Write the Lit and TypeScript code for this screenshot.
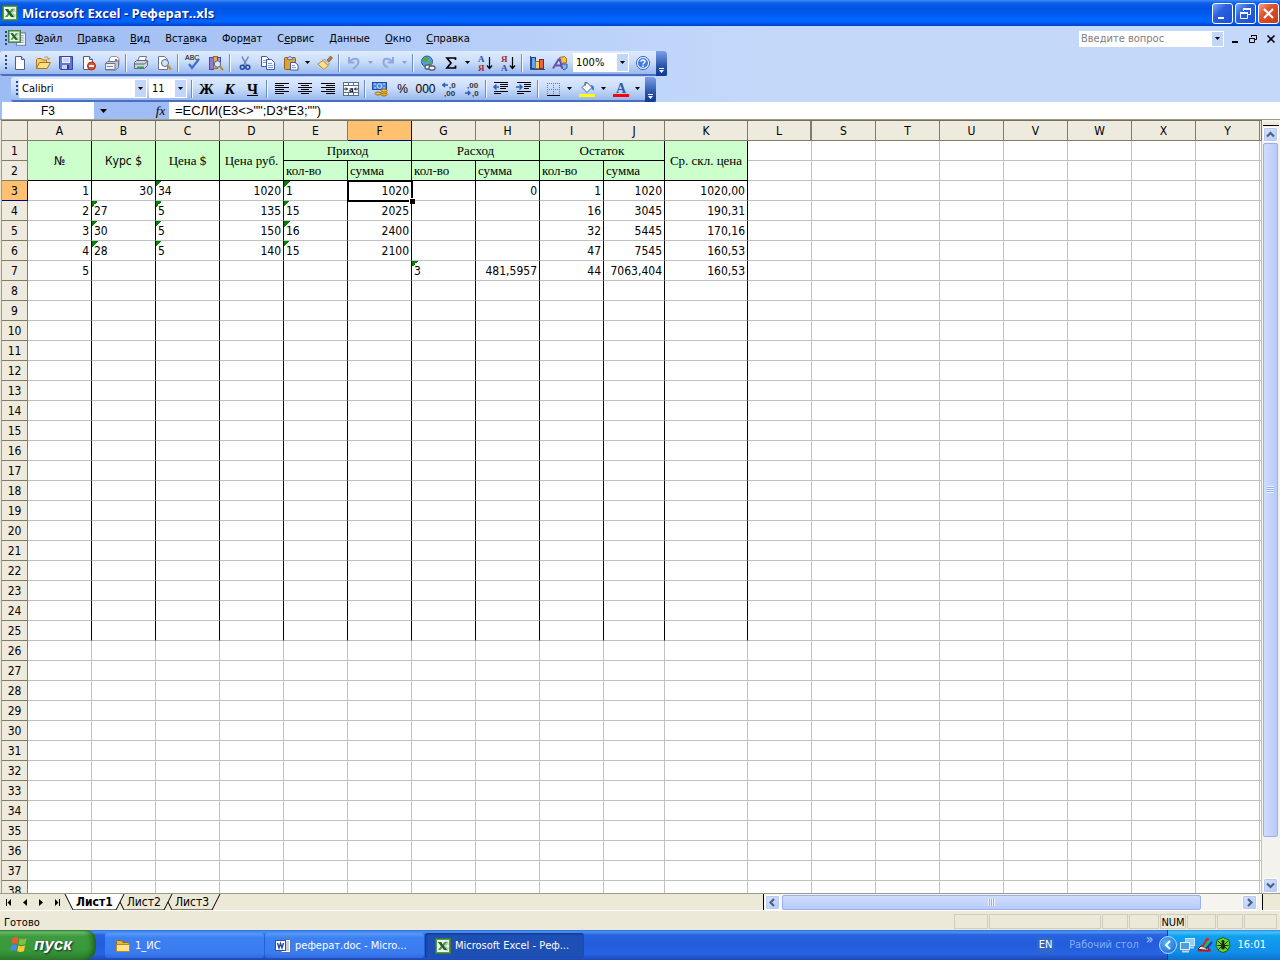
import { LitElement, html, css, svg, nothing, TemplateResult } from "lit";
import { customElement } from "lit/decorators.js";
import { classMap } from "lit/directives/class-map.js";

type Cell = { t: string; left?: boolean; flag?: boolean };

const COLS = ["A", "B", "C", "D", "E", "F", "G", "H", "I", "J", "K", "L", "S", "T", "U", "V", "W", "X", "Y"];
const n = (t: string): Cell => ({ t });
const s = (t: string): Cell => ({ t, left: true, flag: true });

const DATA: Record<number, Record<string, Cell>> = {
  3: { A: n("1"), B: n("30"), C: s("34"), D: n("1020"), E: s("1"), F: n("1020"), H: n("0"), I: n("1"), J: n("1020"), K: n("1020,00") },
  4: { A: n("2"), B: s("27"), C: s("5"), D: n("135"), E: s("15"), F: n("2025"), I: n("16"), J: n("3045"), K: n("190,31") },
  5: { A: n("3"), B: s("30"), C: s("5"), D: n("150"), E: s("16"), F: n("2400"), I: n("32"), J: n("5445"), K: n("170,16") },
  6: { A: n("4"), B: s("28"), C: s("5"), D: n("140"), E: s("15"), F: n("2100"), I: n("47"), J: n("7545"), K: n("160,53") },
  7: { A: n("5"), G: s("3"), H: n("481,5957"), I: n("44"), J: n("7063,404"), K: n("160,53") },
};

const MENU: [string, string, string][] = [
  ["", "Ф", "айл"], ["", "П", "равка"], ["", "В", "ид"], ["Вст", "а", "вка"], ["Фор", "м", "ат"],
  ["С", "е", "рвис"], ["", "Д", "анные"], ["", "О", "кно"], ["", "С", "правка"],
];

const page = svg`<path d="M3.5 1.5h6l3 3v10h-9z" fill="#fff" stroke="#4a5f94"/><path d="M9.5 1.5v3h3" fill="#c7d5f2" stroke="#4a5f94"/>`;
const lines = (a: [number, number, number][]) => a.map(([x, y, w]) => svg`<rect x=${x} y=${y} width=${w} height="1" fill="#000"/>`);
const excel = svg`<rect x=".5" y=".5" width="15" height="15" fill="#5a9a4c" stroke="#3c7a34"/><rect x="2" y="2" width="12" height="12" fill="#eef6ec"/><path d="M10 4h3l-2.500 4L13 12h-3M10 6h4M10 10h4" fill="none" stroke="#a9bfa6"/><path d="M3 4h3l1.500 2.500L9.500 4H12L9 8l3 4H9L7.500 9.500 5.500 12H3l3-4z" fill="#3e9a46"/><path d="M3 4h3l6 8H9z" fill="#1d6328"/>`;

const ICONS: Record<string, unknown> = {
  excel,
  book: svg`<path d="M9.500 2.500h6v11h-8v-3" fill="#fff" stroke="#6b7fae"/><path d="M10 5h4M10 7h4M10 9h4M9 11h5" stroke="#8fa4d3"/><g transform="scale(.72)">${excel}</g>`,
  new: page,
  open: svg`<path d="M1.500 13.500v-9l1-1h4l1 1.500h4v3" fill="#f6cf6b" stroke="#a9741c"/><path d="M1.500 13.500l3-6h11l-3.500 6z" fill="#ffdf83" stroke="#a9741c"/><path d="M9 3c2-2 4-1.500 4.500 1M12 3.500l1.700 1.200L15 3" fill="none" stroke="#e08b1d"/>`,
  save: svg`<path d="M1.500 1.500h13v13h-12l-1-1z" fill="#6177cf" stroke="#3544a0"/><rect x="4" y="2" width="8" height="6" fill="#eef1fd"/><path d="M5 4h6M5 6h6" stroke="#a9b6e6"/><rect x="4" y="10" width="7" height="4" fill="#c7cff0"/><rect x="9" y="10" width="2" height="4" fill="#2e3c8e"/>`,
  perm: svg`<path d="M2.500 1.500h6l3 3v10h-9z" fill="#fff" stroke="#4a5f94"/><path d="M8.500 1.500v3h3" fill="#c7d5f2" stroke="#4a5f94"/><circle cx="10.500" cy="11" r="4" fill="#e2502e" stroke="#a92c12"/><rect x="8" y="10" width="5" height="2" fill="#fff"/>`,
  mail: svg`<path d="M5.500 7V3l2-1.500h5l2.500 2V10h-4" fill="#fff" stroke="#8a93a8"/><path d="M1.500 8.500l2-2h8l3-1v7l-3 2.500h-10z" fill="#c0c8d8" stroke="#6b7690"/><path d="M1.500 8.500h9.500v6H1.500z" fill="#eceff6" stroke="#6b7690"/><path d="M3 11.500h6" stroke="#7b86a0"/><rect x="11" y="4" width="2" height="2" fill="#d85b2e"/>`,
  print: svg`<path d="M4.500 6l2-4.500h7L12 6" fill="#fff" stroke="#6b7690"/><path d="M1.500 7.500l2-2h11v5l-3 3h-10z" fill="#cfd5df" stroke="#5b657c"/><path d="M2 9h9.500l3-3" fill="none" stroke="#5b657c"/><path d="M4 12.500h7" stroke="#3aa53a" stroke-width="2"/>`,
  preview: svg`<path d="M2.500 1.500h6l3 3v10h-9z" fill="#fff" stroke="#6b7690"/><circle cx="9" cy="8" r="3.500" fill="#cfe4f8" stroke="#566a8c"/><path d="M11.500 10.500l3.500 4" stroke="#c58a2a" stroke-width="2"/>`,
  spell: svg`<text x="0" y="5" class="abc">ABC</text><path d="M4 9l3 4 7-9" fill="none" stroke="#3d6fd0" stroke-width="2.200"/>`,
  research: svg`<rect x="1.500" y="2.500" width="4" height="12" fill="#8b7bd2" stroke="#53459b"/><rect x="5.500" y="1.500" width="4" height="12" fill="#e9a94a" stroke="#9b6b1c"/><rect x="9.500" y="2.500" width="3" height="9" fill="#9aa6e3" stroke="#53459b"/><circle cx="9.500" cy="9" r="3.200" fill="#d6e8fa" stroke="#566a8c"/><path d="M12 11.500l3 3.500" stroke="#c58a2a" stroke-width="2"/>`,
  cut: svg`<path d="M5 1.500l4.500 9M11.500 1.500l-5 9" stroke="#6b86b8" stroke-width="1.500"/><circle cx="5.300" cy="12.300" r="2" fill="none" stroke="#23479b" stroke-width="1.500"/><circle cx="10.800" cy="12.300" r="2" fill="none" stroke="#23479b" stroke-width="1.500"/>`,
  copy: svg`<path d="M1.500 1.500h5l2.500 2.500v7.500H1.500z" fill="#fff" stroke="#3d5ba8"/><path d="M3 5.500h3M3 7.500h3" stroke="#7d9be0"/><path d="M6.500 4.500h5l3 3v7h-8z" fill="#fff" stroke="#3d5ba8"/><path d="M8 8.500h4M8 10.500h5M8 12.500h5" stroke="#7d9be0"/>`,
  paste: svg`<rect x="1.500" y="2.500" width="11" height="12" rx="1" fill="#dba13b" stroke="#8f611a"/><path d="M4.500 4.500v-2h1.500l1-1.500 1 1.500h1.500v2z" fill="#d8dce8" stroke="#6b7690"/><path d="M7.500 7.500h4.500l3 2.500v5H7.500z" fill="#fff" stroke="#3d5ba8"/><path d="M9 10.500h3M9 12.500h4" stroke="#7d9be0"/>`,
  brush: svg`<path d="M10 5l3.500-4L15.500 3 12 7z" fill="#b57a2c" stroke="#7a4e16" stroke-width=".6"/><path d="M7.500 4l5 5-1.500 1.500-5-5z" fill="#d9dfeb" stroke="#6b7690" stroke-width=".7"/><path d="M6 5.500l5 5-4 4L.800 9z" fill="#ffe08a" stroke="#a9741c" stroke-width=".8"/>`,
  undo: svg`<path d="M3 2v5.500h5.500M3.500 7c3-4.500 9-4.500 9 0 0 3-3 4.500-5.500 7" fill="none" stroke="#8fa9da" stroke-width="2"/>`,
  redo: svg`<path d="M13 2v5.500H7.500M12.500 7c-3-4.500-9-4.500-9 0 0 3 2 4.500 4.500 5" fill="none" stroke="#8fa9da" stroke-width="2"/>`,
  link: svg`<circle cx="7" cy="6.500" r="5.500" fill="#5a9be0" stroke="#2c5d9c"/><path d="M3 3.500l4-2 2 2-2 3-3 1zM8 8l4-2v4l-3 1z" fill="#4fae3a"/><g fill="#f0f3f8"><rect x="5" y="10" width="6" height="4" rx="2" stroke="#555f73" stroke-width="1.300"/><rect x="9" y="11" width="6" height="4" rx="2" stroke="#555f73" stroke-width="1.300"/></g>`,
  sum: svg`<path d="M12.500 5V3H4l4 5-4 5h8.500v-2.500" fill="none" stroke="#000" stroke-width="1.700"/>`,
  az: svg`<text x="1" y="7" class="gs" fill="#28509c">А</text><text x="1" y="16" class="gs" fill="#a02c2c">Я</text><path d="M12.500 2v11M10 10.500l2.500 3 2.500-3" fill="none" stroke="#000" stroke-width="1.200"/>`,
  za: svg`<text x="1" y="7" class="gs" fill="#a02c2c">Я</text><text x="1" y="16" class="gs" fill="#28509c">А</text><path d="M12.500 2v11M10 10.500l2.500 3 2.500-3" fill="none" stroke="#000" stroke-width="1.200"/>`,
  chart: svg`<path d="M1.500 1v13.500H16" fill="none" stroke="#2c4c92"/><rect x="2.500" y="2.500" width="4" height="11" fill="#6ba0ee" stroke="#21458f"/><rect x="6.500" y="6.500" width="4" height="7" fill="#ffcf4f" stroke="#a2700e"/><rect x="10.500" y="4.500" width="4" height="9" fill="#e5673a" stroke="#8c2411"/>`,
  draw: svg`<path d="M7.500 2.500l5-1 2 2v4l-5 1-2-2z" fill="#f3c04d" stroke="#a2700e"/><path d="M10 9h5v4l-3 2-3-3z" fill="#7fb4ec" stroke="#2c5d9c"/><path d="M1 13.500L6.500 4.500h1.500l2 9M3.500 10.500h6" fill="none" stroke="#6850ac" stroke-width="2"/>`,
  help: svg`<circle cx="8" cy="8" r="6.500" fill="#fff" stroke="#2d5fc4"/><circle cx="8" cy="8" r="5" fill="#3d7be2"/><path d="M6 6.800c0-2.500 4-2.500 4-.3 0 1.500-2 1.500-2 3M8 10.500v1.500" fill="none" stroke="#fff" stroke-width="1.500"/>`,
  al: lines([[1, 2, 14], [1, 4, 9], [1, 6, 14], [1, 8, 9], [1, 10, 14], [1, 12, 9]]),
  ac: lines([[1, 2, 14], [4, 4, 8], [1, 6, 14], [4, 8, 8], [1, 10, 14], [4, 12, 8]]),
  ar: lines([[1, 2, 14], [6, 4, 9], [1, 6, 14], [6, 8, 9], [1, 10, 14], [6, 12, 9]]),
  merge: svg`<rect x=".5" y="1.500" width="15" height="13" fill="#fff" stroke="#5c6c8c"/><path d="M.5 4.500h15M.5 11.500h15M5.500 1.500v3M10.500 1.500v3M5.500 11.500v3M10.500 11.500v3" stroke="#5c6c8c"/><path d="M1 8h3.500M3 6.500L4.500 8 3 9.500M15 8h-3.500M13 6.500L11.500 8 13 9.500" fill="none" stroke="#000" stroke-width=".9"/><text x="6" y="10.500" class="gs" fill="#000">a</text>`,
  money: svg`<rect x=".5" y="1.500" width="14" height="7" fill="#4f86dc" stroke="#1f4b9c"/><circle cx="7.500" cy="5" r="2.300" fill="none" stroke="#d4e4fb"/><path d="M2 3h2M11 3h2M2 7h2M11 7h2" stroke="#d4e4fb"/><ellipse cx="6" cy="12.500" rx="3" ry="1.500" fill="#ffc843" stroke="#9a680f"/><ellipse cx="12" cy="13.500" rx="3" ry="1.500" fill="#ffc843" stroke="#9a680f"/><ellipse cx="12" cy="11.500" rx="3" ry="1.500" fill="#ffc843" stroke="#9a680f"/><ellipse cx="12" cy="9.500" rx="3" ry="1.500" fill="#ffc843" stroke="#9a680f"/>`,
  incd: svg`<text x="8" y="7" class="num">,0</text><text x="3" y="15" class="num">,00</text><path d="M1 4h6M4 2L2 4l2 2" fill="none" stroke="#2b5cc2" stroke-width="1.500"/>`,
  decd: svg`<text x="3" y="7" class="num">,00</text><text x="8" y="15" class="num">,0</text><path d="M1 12h5.500M4 10l2 2-2 2" fill="none" stroke="#2b5cc2" stroke-width="1.500"/>`,
  outd: svg`${lines([[1, 1, 14], [7, 3, 8], [7, 5, 8], [7, 7, 6], [1, 10, 14], [1, 12, 7]])}<path d="M6 6H1M3.500 3.500L1 6l2.500 2.500" fill="none" stroke="#2b5cc2" stroke-width="1.500"/>`,
  ind: svg`${lines([[1, 1, 14], [8, 3, 7], [8, 5, 7], [8, 7, 5], [1, 10, 14], [1, 12, 7]])}<path d="M0 6h5.500M3.500 3.500L6 6 3.500 8.500" fill="none" stroke="#2b5cc2" stroke-width="1.500"/>`,
  border: svg`<path d="M2.500 2v12M8.500 2v12M14.500 2v12M2 2.500h13M2 8.500h13" stroke="#66789c" stroke-dasharray="1 1"/><path d="M2 14.500h13" stroke="#000"/>`,
  fill: svg`<path d="M3 6.500L8 1.500l5 5-5 5z" fill="#f4f7fd" stroke="#4c5f8a"/><path d="M6 5V1.500h2" fill="none" stroke="#4c5f8a"/><path d="M12 4c3 .5 3.500 3 2.500 6l-2-3z" fill="#3c6fd0"/><rect x="0" y="13" width="16" height="3" fill="#ff0"/>`,
  color: svg`<text x="3" y="11.500" class="big" fill="#315ba8">A</text><rect x="0" y="13" width="16" height="3" fill="#f00"/>`,
  folder: svg`<path d="M1.500 13.500v-10l1-1h4l1.500 2h5l1 1v8z" fill="#e9b93e" stroke="#8f6a12"/><path d="M1.500 6.500h13v7h-13z" fill="#ffe38a" stroke="#b58a25"/>`,
  word: svg`<path d="M8.500 1.500h7v13h-9" fill="#fff" stroke="#5772b5"/><path d="M10 4h4M10 6h4M10 8h4M10 10h4M9 12h5" stroke="#7d9be0"/><rect x=".5" y="2.500" width="10" height="10" fill="#fff" stroke="#2c4fa8"/><path d="M2.500 5l1.500 5 1.500-4.500L7 10l1.500-5" fill="none" stroke="#2346a0" stroke-width="1.400"/>`,
  net: svg`<rect x="6.500" y="1.500" width="9" height="7" fill="#8ed0fa" stroke="#d8e6f4"/><rect x="1.500" y="5.500" width="9" height="7" fill="#4f9be8" stroke="#e3eefa"/><path d="M3 14.500h7M11 10.500h4" stroke="#c9d6e6" stroke-width="2"/>`,
  pen: svg`<path d="M1 12l3-3 8 2-1 3z" fill="#e8ecf6" stroke="#223"/><path d="M5 10l5-8 2 1" fill="none" stroke="#e02020" stroke-width="2"/><path d="M7 11l6-8" stroke="#28c028" stroke-width="2"/><path d="M9 12l6-7" stroke="#2038d0" stroke-width="2"/><path d="M1 13.500h13" stroke="#c01818" stroke-width="2"/>`,
  bug: svg`<path d="M8 .5l6 2.500 1 6-3 5-4 1.500L4 14 1 9l1-6z" fill="#6bd428" stroke="#176a10"/><ellipse cx="8" cy="9" rx="2" ry="3.500" fill="#122a08"/><circle cx="8" cy="4.500" r="1.500" fill="#122a08"/><path d="M3 4l3 3M13 4l-3 3M2.500 8.500h11M3 13l3-3M13 13l-3-3" stroke="#122a08"/>`,
};

const icon = (name: string, size = 16) =>
  html`<svg class="ic" width=${size} height=${size} viewBox="0 0 16 16" aria-hidden="true">${ICONS[name]}</svg>`;
const down = html`<svg class="tri" width="5" height="3" viewBox="0 0 5 3" aria-hidden="true"><path d="M0 0h5L2.500 3z" fill="currentColor"/></svg>`;
const chev = (d: string) =>
  html`<svg width="9" height="9" viewBox="0 0 9 9" aria-hidden="true"><path d=${d} fill="none" stroke="#4d6185" stroke-width="2.200"/></svg>`;

@customElement("app-root")
export class AppRoot extends LitElement {
  static styles = css`
    :host {
      --ui: "DejaVu Sans Condensed", "DejaVu Sans", sans-serif;
      display: flex; flex-direction: column; height: 100vh; overflow: hidden;
      font: 11px/14px Tahoma, var(--ui); color: #000; background: #ece9d8;
    }
    * { box-sizing: border-box; }
    button, input, select { font: inherit; color: inherit; border: 0; padding: 0; margin: 0; background: none; border-radius: 0; outline: 0; }
    svg { display: block; flex: none; overflow: visible; }
    .gs { font: bold 9px "Liberation Serif", serif; }
    .big { font: bold 14px "Liberation Serif", serif; }
    .abc { font: 7px "Liberation Sans", sans-serif; }
    .num { font: bold 8px "Liberation Sans Narrow", "Liberation Sans", sans-serif; fill: #333; }

    .title { display: flex; align-items: center; height: 26px; flex: none; padding: 0 1px 0 2px; gap: 4px;
      background: linear-gradient(#3c8cf8 0, #0d5fe8 3px, #0054e3 8px, #0058ee 13px, #0066ff 20px, #0062fa 22px, #0040c4 26px);
      color: #fff; }
    .title h1 { flex: 1; margin: 0; font: bold 13px/18px "Open Sans", "Noto Sans", sans-serif; text-shadow: 1px 1px 1px #0f1089; }
    .wins { display: flex; gap: 2px; }
    .win { width: 21px; height: 21px; border: 1px solid #fff; border-radius: 3px; display: grid; place-items: center;
      background: linear-gradient(135deg, #7fa6f4, #2a5fe0 40%, #1c4fd6); }
    .win.x { background: linear-gradient(135deg, #f0a088, #e0502c 40%, #c53a14); }

    .bars { flex: none; background: linear-gradient(90deg, #9ebcf4, #c4d9fa 60%); }
    .menubar { display: flex; align-items: center; height: 25px; padding: 0 4px 0 5px; }
    .menu { display: flex; gap: 15px; flex: 1; padding-left: 9px; }
    .ask { display: flex; width: 147px; height: 18px; background: #fff; border: 1px solid #c4d9fa; margin-right: 5px; }
    .ask input { flex: 1; min-width: 0; padding-left: 2px; }
    .ask input::placeholder { color: #808080; opacity: 1; }
    .drop { width: 11px; display: grid; place-items: center; background: #c1d6f9; margin: 1px; }
    .mdi { display: flex; gap: 8px; }
    .mdi button { width: 10px; height: 10px; }

    .grip { width: 3px; height: 15px; flex: none; background: repeating-linear-gradient(#2a4784 0 2px, transparent 2px 4px) 0 0/2px 100% no-repeat; }
    .toolbar { display: flex; align-items: center; width: max-content; height: 25px; margin-bottom: 1px; padding: 0 0 2px 5px;
      background: linear-gradient(#dfebfe, #c8dcfa 45%, #98b8ee 92%, #4a6fc0 93%); border-radius: 3px 0 0 3px; }
    .toolbar.second { margin: 0 0 0 11px; }
    .tb { width: 23px; height: 23px; display: grid; place-items: center; flex: none; }
    .tb.txt { font: 12px/16px "Liberation Sans Narrow", "Liberation Sans", sans-serif; }
    .tb.fmt { font: bold 15px/18px "Liberation Serif", serif; }
    .tb.ital { font-style: italic; }
    .tb.under { text-decoration: underline; }
    .da { width: 11px; height: 23px; display: grid; place-items: center; flex: none; }
    .dim { color: #8c9fc4; }
    .sep { width: 6px; height: 18px; flex: none; background: linear-gradient(90deg, #6a8ccb 1px, #f1f9ff 1px) 2px 0/2px 100% no-repeat; }
    .combo { display: grid; height: 19px; background: #fff; margin-right: 2px; }
    .combo select, .combo .drop { grid-area: 1 / 1; }
    .combo select { appearance: none; width: 100%; padding: 0 14px 0 3px; }
    .combo .drop { justify-self: end; pointer-events: none; }
    .w-font { width: 128px; } .w-size { width: 38px; } .w-zoom { width: 56px; margin-left: 2px; }
    .cap { width: 11px; height: 25px; display: flex; flex-direction: column; align-items: center; justify-content: flex-end; gap: 1px; padding-bottom: 3px; margin: 0 0 -2px 2px;
      color: #fff; background: linear-gradient(#7ba0e8, #2a55a8 60%, #0a3a94); border-radius: 0 3px 3px 0; }
    .cap::before { content: ""; width: 5px; height: 1px; background: #fff; }

    .formula { display: flex; align-items: center; height: 17px; flex: none; background: #a0bcf5; }
    .formula .ref { width: 92px; height: 17px; margin-left: 2px; background: #fff; text-align: center; font: 12px/16px "Liberation Sans", sans-serif; }
    .formula .pick { width: 18px; height: 17px; display: grid; place-items: center; }
    .formula .fx { margin-left: 40px; width: 17px; font: italic 13px/16px "Liberation Serif", serif; text-align: center; }
    .formula .expr { flex: 1; min-width: 0; height: 17px; background: #fff; padding: 0 6px; font: 13px/16px "Liberation Sans", sans-serif; }

    .body { flex: 1; min-height: 0; display: flex; border-top: 1px solid #9d9a88; background: #ece9d8; }
    .sheet { flex: 1; min-width: 0; overflow: hidden; border-top: 1px solid #716f64; border-left: 1px solid #9d9a88; margin-left: 1px; background: #fff; }
    table { table-layout: fixed; width: 100%; border-collapse: separate; border-spacing: 0; }
    th, td { height: 20px; padding: 0 2px; border-right: 1px solid #c0c0c0; border-bottom: 1px solid #c0c0c0; white-space: nowrap;
      font: 12px/16px var(--ui); text-align: right; vertical-align: middle; }
    th { background: #eeeade; border-color: #807c68; text-align: center; padding: 0; }
    .c0 { width: 26px; } .c64 { width: 64px; } .c61 { width: 61px; } .c83 { width: 83px; }
    th.sel { background: #ffc06f; }
    thead th.sel { border-color: #000080; }
    tbody th.sel { border-color: #000080; }
    thead th.fold { border-right-width: 2px; }
    td.blk { border-right-color: #000; }
    td.left { text-align: left; padding-left: 2px; }
    td.flag { background: linear-gradient(135deg, #008000 50%, transparent 50%) 0 0/6px 6px no-repeat; }
    td.head { background: #cfc; border-color: #000; text-align: center; font: 13px/16px "Liberation Serif", serif; padding: 0; }
    td.head.sub { text-align: left; padding-left: 2px; }
    td.head.sans { font: 12px/16px var(--ui); }
    td.cur { position: relative; }
    td.cur::before { content: ""; position: absolute; inset: -1px -2px -2px -1px; border: 2px solid #000; }
    td.cur::after { content: ""; position: absolute; right: -4px; bottom: -4px; width: 5px; height: 5px; background: #000; border: solid #fff; border-width: 1px 0 0 1px; box-sizing: content-box; }

    .vscroll { width: 18px; flex: none; display: flex; flex-direction: column; padding: 2px 1px 0 1px; gap: 1px; background: #f3f2ec; }
    .split { height: 4px; flex: none; border-bottom: 1px solid #000; background: #ece9d8; }
    .sb { width: 15px; height: 15px; flex: none; display: grid; place-items: center; border: 1px solid #fff; border-radius: 2px; background: linear-gradient(135deg, #d6e3ff, #b4c9f8); box-shadow: 0 0 0 1px #b8caf2 inset; }
    .track { flex: 1; min-height: 0; min-width: 0; display: flex; }
    .vscroll .track { flex-direction: column; }
    .thumb { display: grid; place-items: center; border: 1px solid #98b1ec; border-radius: 2px; }
    .vscroll .thumb { flex: 0 0 94.500%; width: 15px; background: linear-gradient(90deg, #cfdcfd, #b7cbfa); }
    .gr { width: 7px; height: 7px; background: repeating-linear-gradient(#eef4fe 0 1px, #8cb0f8 1px 2px); }
    .gr.v { background: repeating-linear-gradient(90deg, #eef4fe 0 1px, #8cb0f8 1px 2px); }

    .tabs { display: flex; height: 18px; flex: none; border-top: 1px solid #9d9a88; border-bottom: 1px solid #fff; padding-left: 1px; }
    .nav { display: flex; }
    .nav button { width: 16px; display: grid; place-items: center; }
    .sheets { display: flex; flex: 1; min-width: 0; font: 12px/15px var(--ui); }
    .sheets button { height: 16px; border-bottom: 1px solid #807c68; padding: 1px 3px 0; }
    .sheets .on { background: #fff; font-weight: bold; }
    .slash { width: 8px; height: 16px; }
    .hscroll { display: flex; width: 499px; align-items: center; gap: 2px; padding: 0 5px 0 1px; background: #f5f4ee; border-left: 1px solid #000; }
    .hscroll .thumb { flex: 0 0 91.500%; height: 15px; background: linear-gradient(#cfdcfd, #b7cbfa); }
    .corner { width: 18px; border-left: 1px solid #000; background: #ece9d8; }

    .status { display: flex; align-items: center; height: 19px; flex: none; padding: 2px 3px 0 4px; gap: 1px; }
    .status p { flex: 1; margin: 0; padding-top: 2px; }
    .pane { height: 15px; border: 1px solid #cfccc0; text-align: center; line-height: 15px; }

    .taskbar { display: flex; align-items: stretch; height: 30px; flex: none; color: #fff;
      background: linear-gradient(#2a6be0 0, #4d93f2 2px, #2862de 5px, #245cdc 14px, #2663e2 24px, #1c48b4 30px); }
    .start { display: flex; align-items: center; gap: 6px; width: 96px; padding-left: 10px; margin-right: 9px; border-radius: 0 10px 12px 0;
      background: linear-gradient(#2f7a2f 0, #6cc06c 2px, #3f9a40 6px, #379a38 20px, #2c7a2d 30px);
      box-shadow: -6px 0 6px -3px #1d5a1e inset; font: italic bold 17px/24px "Liberation Sans", sans-serif; text-shadow: 1px 1px 2px #123; }
    .task { display: flex; align-items: center; gap: 4px; width: 159px; height: 25px; margin: 3px 1px 0 0; padding-left: 10px; border-radius: 3px;
      background: linear-gradient(#5a9bfa, #3c80f2 5px, #3a7cf0 20px, #2f68dc); white-space: nowrap; }
    .task.act { background: #1d4fb5; box-shadow: 1px 1px 2px #0f3584 inset; }
    .gap { flex: 1; }
    .lang { align-self: center; width: 17px; background: #3067c4; text-align: center; line-height: 16px; margin-right: 15px; }
    .desk { align-self: center; color: #7fb0f6; }
    .more { color: #a8ccff; font: 14px/18px var(--ui); padding: 0 14px 0 7px; }
    .tray { display: flex; align-items: center; gap: 2px; padding-right: 14px; border-left: 1px solid #0b3f9e;
      background: linear-gradient(#1a8ae4 0, #4bc0fa 2px, #12a0ee 6px, #0f8fea 22px, #0e74cc 30px); }
    .back { width: 18px; height: 18px; margin-left: -9px; border-radius: 50%; display: grid; place-items: center; background: radial-gradient(circle at 40% 35%, #58b4fa, #1560d0); border: 1px solid #b8dcfc; }
    .tray time { padding-left: 4px; }
  `;

  private tb(name: string, label: string) {
    return html`<button class="tb" aria-label=${label}>${icon(name)}</button>`;
  }
  private da(label: string, dim = false) {
    return html`<button class=${classMap({ da: true, dim })} aria-label=${label}>${down}</button>`;
  }
  private combo(cls: string, label: string, value: string) {
    return html`<span class="combo ${cls}"><select aria-label=${label}><option>${value}</option></select><span class="drop">${down}</span></span>`;
  }

  private headRows(): TemplateResult {
    const blanks = COLS.slice(11).map(() => html`<td></td>`);
    const pair = html`<td class="head sub">кол-во</td><td class="head sub">сумма</td>`;
    return html`
      <tr><th scope="row">1</th><td class="head sans" rowspan="2">№</td><td class="head sans" rowspan="2">Курс $</td>
        <td class="head" rowspan="2">Цена $</td><td class="head" rowspan="2">Цена руб.</td>
        <td class="head" colspan="2">Приход</td><td class="head" colspan="2">Расход</td><td class="head" colspan="2">Остаток</td>
        <td class="head" rowspan="2">Ср. скл. цена</td>${blanks}<td></td></tr>
      <tr><th scope="row">2</th>${pair}${pair}${pair}${blanks}<td></td></tr>`;
  }

  private row(r: number): TemplateResult {
    return html`<tr><th scope="row" class=${classMap({ sel: r === 3 })}>${r}</th>${COLS.map((c, i) => {
      const d = DATA[r]?.[c];
      return html`<td class=${classMap({ blk: i < 11 && i > 0 && r <= 25 || i === 0 && r <= 25, left: !!d?.left, flag: !!d?.flag, cur: r === 3 && c === "F" })}>${d ? d.t : nothing}</td>`;
    })}<td></td></tr>`;
  }

  private slash(d: string, bg = "") {
    return html`<svg class="slash" viewBox="0 0 8 16" aria-hidden="true">${bg ? svg`<path d=${bg} fill="#fff"/>` : nothing}<path d=${d} fill="none" stroke="#000"/></svg>`;
  }

  render() {
    const sep = html`<span class="sep"></span>`;
    const cap = html`<button class="cap" aria-label="Параметры панели">${down}</button>`;
    const width = (c: string) => (c === "J" ? "c61" : c === "K" ? "c83" : "c64");
    return html`
      <header class="title">
        ${icon("excel")}
        <h1>Microsoft Excel - Реферат..xls</h1>
        <div class="wins">
          <button class="win" aria-label="Свернуть"><svg width="13" height="13"><path d="M2 10h6v2H2z" fill="#fff"/></svg></button>
          <button class="win" aria-label="Восстановить"><svg width="13" height="13"><path d="M4.500 4V1.500h7v6H9M1.500 5.500h7v6h-7z" fill="none" stroke="#fff"/><path d="M4 1h8v2H4zM1 5h8v2H1z" fill="#fff"/></svg></button>
          <button class="win x" aria-label="Закрыть"><svg width="13" height="13"><path d="M2 2l9 9M11 2l-9 9" stroke="#fff" stroke-width="2.200"/></svg></button>
        </div>
      </header>
      <div class="bars">
        <nav class="menubar">
          <span class="grip"></span>${icon("book", 18)}
          <div class="menu">${MENU.map(([a, u, b]) => html`<button>${a}<u>${u}</u>${b}</button>`)}</div>
          <div class="ask"><input aria-label="Вопрос" placeholder="Введите вопрос"><span class="drop">${down}</span></div>
          <div class="mdi">
            <button aria-label="Свернуть книгу"><svg width="10" height="10"><path d="M2 7h6v2H2z"/></svg></button>
            <button aria-label="Восстановить книгу"><svg width="10" height="10"><path d="M3.500 3V1.500h5v4H7M1.500 4.500h5v4h-5z" fill="none" stroke="#000"/><path d="M3 1h6v1H3zM1 4h6v1H1z"/></svg></button>
            <button aria-label="Закрыть книгу"><svg width="10" height="10"><path d="M1.500 1.500l7 7M8.500 1.500l-7 7" stroke="#000" stroke-width="1.600"/></svg></button>
          </div>
        </nav>
        <div class="toolbar">
          <span class="grip"></span>
          ${this.tb("new", "Создать")}${this.tb("open", "Открыть")}${this.tb("save", "Сохранить")}${this.tb("perm", "Разрешения")}${this.tb("mail", "Сообщение")}
          ${sep}${this.tb("print", "Печать")}${this.tb("preview", "Просмотр")}
          ${sep}${this.tb("spell", "Орфография")}${this.tb("research", "Справочные материалы")}
          ${sep}${this.tb("cut", "Вырезать")}${this.tb("copy", "Копировать")}${this.tb("paste", "Вставить")}${this.da("Варианты вставки")}${this.tb("brush", "Формат по образцу")}
          ${sep}${this.tb("undo", "Отменить")}${this.da("Список отмены", true)}${this.tb("redo", "Вернуть")}${this.da("Список возврата", true)}
          ${sep}${this.tb("link", "Гиперссылка")}${this.tb("sum", "Автосумма")}${this.da("Функции")}${this.tb("az", "По возрастанию")}${this.tb("za", "По убыванию")}
          ${sep}${this.tb("chart", "Диаграмма")}${this.tb("draw", "Рисование")}
          ${this.combo("w-zoom", "Масштаб", "100%")}${this.tb("help", "Справка")}${cap}
        </div>
        <div class="toolbar second">
          <span class="grip"></span>
          ${this.combo("w-font", "Шрифт", "Calibri")}${this.combo("w-size", "Размер", "11")}
          ${sep}<button class="tb fmt">Ж</button><button class="tb fmt ital">К</button><button class="tb fmt under">Ч</button>
          ${sep}${this.tb("al", "По левому краю")}${this.tb("ac", "По центру")}${this.tb("ar", "По правому краю")}${this.tb("merge", "Объединить")}
          ${sep}${this.tb("money", "Денежный формат")}<button class="tb txt">%</button><button class="tb txt">000</button>${this.tb("incd", "Увеличить разрядность")}${this.tb("decd", "Уменьшить разрядность")}
          ${sep}${this.tb("outd", "Уменьшить отступ")}${this.tb("ind", "Увеличить отступ")}
          ${sep}${this.tb("border", "Границы")}${this.da("Виды границ")}${this.tb("fill", "Цвет заливки")}${this.da("Цвета заливки")}${this.tb("color", "Цвет шрифта")}${this.da("Цвета шрифта")}${cap}
        </div>
      </div>
      <div class="formula">
        <input class="ref" aria-label="Имя" .value=${"F3"}>
        <button class="pick" aria-label="Список имён"><svg width="7" height="4"><path d="M0 0h7L3.500 4z"/></svg></button>
        <button class="fx">fx</button>
        <input class="expr" aria-label="Формула" .value=${'=ЕСЛИ(E3<>"";D3*E3;"")'}>
      </div>
      <main class="body">
        <div class="sheet">
          <table>
            <colgroup><col class="c0">${COLS.map((c) => html`<col class=${width(c)}>`)}<col></colgroup>
            <thead><tr><th></th>${COLS.map((c) => html`<th scope="col" class=${classMap({ sel: c === "F", fold: c === "L" })}>${c}</th>`)}<th></th></tr></thead>
            <tbody>${this.headRows()}${Array.from({ length: 36 }, (_, i) => this.row(i + 3))}</tbody>
          </table>
        </div>
        <div class="vscroll">
          <span class="split"></span>
          <button class="sb" aria-label="Вверх">${chev("M1 6.500L4.500 3 8 6.500")}</button>
          <div class="track"><div class="thumb"><span class="gr"></span></div></div>
          <button class="sb" aria-label="Вниз">${chev("M1 2.500L4.500 6 8 2.500")}</button>
        </div>
      </main>
      <div class="tabs">
        <div class="nav">
          <button aria-label="Первый лист"><svg width="8" height="7"><path d="M1 0h1v7H1zM6 0v7L2.500 3.500z"/></svg></button>
          <button aria-label="Предыдущий лист"><svg width="8" height="7"><path d="M6 0L2 3.500 6 7z"/></svg></button>
          <button aria-label="Следующий лист"><svg width="8" height="7"><path d="M2 0l4 3.500L2 7z"/></svg></button>
          <button aria-label="Последний лист"><svg width="8" height="7"><path d="M6 0h1v7H6zM2 0v7l3.500-3.500z"/></svg></button>
        </div>
        <div class="sheets">
          ${this.slash("M0 0l8 16", "M0 0l8 16V0z")}<button class="on">Лист1</button>${this.slash("M8 0L0 16M4 8l4 8", "M0 0h8L0 16z")}
          <button>Лист2</button>${this.slash("M8 0L0 16M4 8l4 8")}<button>Лист3</button>${this.slash("M8 0L0 16")}
        </div>
        <div class="hscroll">
          <button class="sb" aria-label="Влево">${chev("M6 1L2.500 4.500 6 8")}</button>
          <div class="track"><div class="thumb"><span class="gr v"></span></div></div>
          <button class="sb" aria-label="Вправо">${chev("M3 1l3.500 3.500L3 8")}</button>
        </div>
        <span class="corner"></span>
      </div>
      <footer class="status">
        <p>Готово</p>
        ${[[34, ""], [112, ""], [26, ""], [30, ""], [26, "NUM"], [29, ""], [26, ""], [33, ""]].map(([w, t]) => html`<span class="pane" style="width:${w}px">${t}</span>`)}
      </footer>
      <nav class="taskbar">
        <button class="start"><svg width="18" height="18" viewBox="0 0 18 18" aria-hidden="true"><path d="M2.500 2C5 .5 7 1 8.500 2L7.300 8C5.500 7 3.500 7 1.500 8z" fill="#f0592b"/><path d="M9.700 2.500c2 1 4 1 6.800-.3L15.300 8c-2 1.200-4.500 1.300-6.800.3z" fill="#7cc142"/><path d="M1.300 9.300c2-1 4-.9 5.800 0L6 15c-1.500-1-3.500-1-6 0z" fill="#4a86ee"/><path d="M8.300 9.600c2.300 1 4.500.8 6.800-.3L14 15c-2.500 1.300-4.500 1.200-6.800.3z" fill="#fcc92e"/></svg>пуск</button>
        <button class="task">${icon("folder")}1_ИС</button>
        <button class="task">${icon("word")}реферат.doc - Micro...</button>
        <button class="task act">${icon("excel")}Microsoft Excel - Реф...</button>
        <span class="gap"></span>
        <span class="lang">EN</span><span class="desk">Рабочий стол</span><span class="more">»</span>
        <div class="tray">
          <button class="back" aria-label="Показать скрытые значки"><svg width="8" height="8"><path d="M6 0L2 4l4 4" fill="none" stroke="#fff" stroke-width="2"/></svg></button>
          ${icon("net")}${icon("pen")}${icon("bug")}<time>16:01</time>
        </div>
      </nav>`;
  }
}
